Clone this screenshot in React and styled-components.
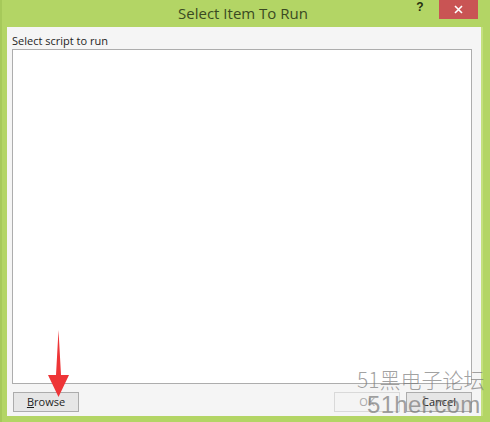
import React from "react";
import styled, { createGlobalStyle } from "styled-components";

const GlobalStyle = createGlobalStyle`
  html, body {
    margin: 0;
    padding: 0;
    overflow: hidden;
  }
  body {
    font-family: "Open Sans", "Liberation Sans", sans-serif;
  }
`;

// Dialog frame
const Window = styled.div`
  position: relative;
  width: 490px;
  height: 422px;
  background: #b3d565;
  border-left: 2px solid #a6c95a;
  box-sizing: border-box;
  display: flex;
  flex-direction: column;
  overflow: hidden;
`;

const TitleBar = styled.div`
  height: 27px;
  display: grid;
  grid-template-columns: 1fr auto 1fr;
  align-items: start;
`;

const Title = styled.div`
  grid-column: 2;
  font-size: 15px;
  line-height: 26px;
  color: #3a4a22;
  margin-right: 6px;
`;

const Controls = styled.div`
  grid-column: 3;
  justify-self: end;
  display: flex;
  align-items: flex-start;
  margin-right: 12px;
`;

const HelpButton = styled.div`
  width: 14px;
  height: 19px;
  font-family: "Liberation Sans", sans-serif;
  font-weight: bold;
  font-size: 12px;
  line-height: 19px;
  color: #263010;
  text-align: center;
  margin-right: 12px;
  margin-top: -2px;
`;

const CloseButton = styled.div`
  width: 39px;
  height: 19px;
  background: #c95454;
  color: #fff;
  display: flex;
  align-items: center;
  justify-content: center;
`;

const Client = styled.div`
  flex: 1;
  margin: 0 7px 6px 5px;
  background: #f5f5f5;
  padding: 7px 9px 4px 5px;
  display: flex;
  flex-direction: column;
  border-right: 2px solid #c4e07f;
`;

const Label = styled.div`
  font-size: 11px;
  line-height: 14px;
  color: #1e1e1e;
  margin-bottom: 1px;
`;

const ListBox = styled.div`
  flex: 1;
  background: #fff;
  border: 1px solid #adadad;
`;

const ButtonRow = styled.div`
  display: flex;
  align-items: center;
  margin-top: 8px;
  padding-left: 1px;
  gap: 6px;
`;

const Spacer = styled.div`
  flex: 1;
`;

const Button = styled.div`
  width: 66px;
  height: 20px;
  box-sizing: border-box;
  border: 1px solid ${(p) => (p.disabled ? "#d9d9d9" : "#acacac")};
  background: ${(p) => (p.disabled ? "#f4f4f4" : "#e6e6e6")};
  color: ${(p) => (p.disabled ? "#a8a8a8" : "#1e1e1e")};
  font-size: 11px;
  line-height: 18px;
  text-align: center;
`;

const Watermark = styled.div`
  position: absolute;
  left: 355px;
  top: 366px;
  display: flex;
  flex-direction: column;
  align-items: flex-start;
  pointer-events: none;
  color: rgba(120, 120, 120, 0.7);
  font-weight: 300;
`;

const MarkCn = styled.div`
  font-family: "Noto Sans CJK SC", sans-serif;
  font-size: 21px;
  line-height: 26px;
  white-space: nowrap;
`;

const MarkUrl = styled.div`
  font-family: "Liberation Sans", sans-serif;
  font-size: 24px;
  line-height: 26px;
  margin-left: 10px;
  letter-spacing: 0.3px;
`;

const Arrow = styled.svg`
  position: absolute;
  left: 46px;
  top: 330px;
`;

export default function App() {
  return (
    <>
      <GlobalStyle />
      <Window>
        <TitleBar>
          <Title>Select Item To Run</Title>
          <Controls>
            <HelpButton>?</HelpButton>
            <CloseButton>
              <svg width="9" height="9" viewBox="0 0 9 9">
                <path d="M1 1 L8 8 M8 1 L1 8" stroke="#fff" strokeWidth="1.6" />
              </svg>
            </CloseButton>
          </Controls>
        </TitleBar>
        <Client>
          <Label>Select script to run</Label>
          <ListBox />
          <ButtonRow>
            <Button>
              <u>B</u>rowse
            </Button>
            <Spacer />
            <Button disabled>OK</Button>
            <Button>Cancel</Button>
          </ButtonRow>
        </Client>
        <Arrow width="22" height="68" viewBox="0 0 22 68">
          <polygon
            points="10.5,0 13,45 21,45 10.5,67 0,45 8,45"
            fill="#ee3537"
          />
        </Arrow>
        <Watermark>
          <MarkCn>51黑电子论坛</MarkCn>
          <MarkUrl>51hei.com</MarkUrl>
        </Watermark>
      </Window>
    </>
  );
}
